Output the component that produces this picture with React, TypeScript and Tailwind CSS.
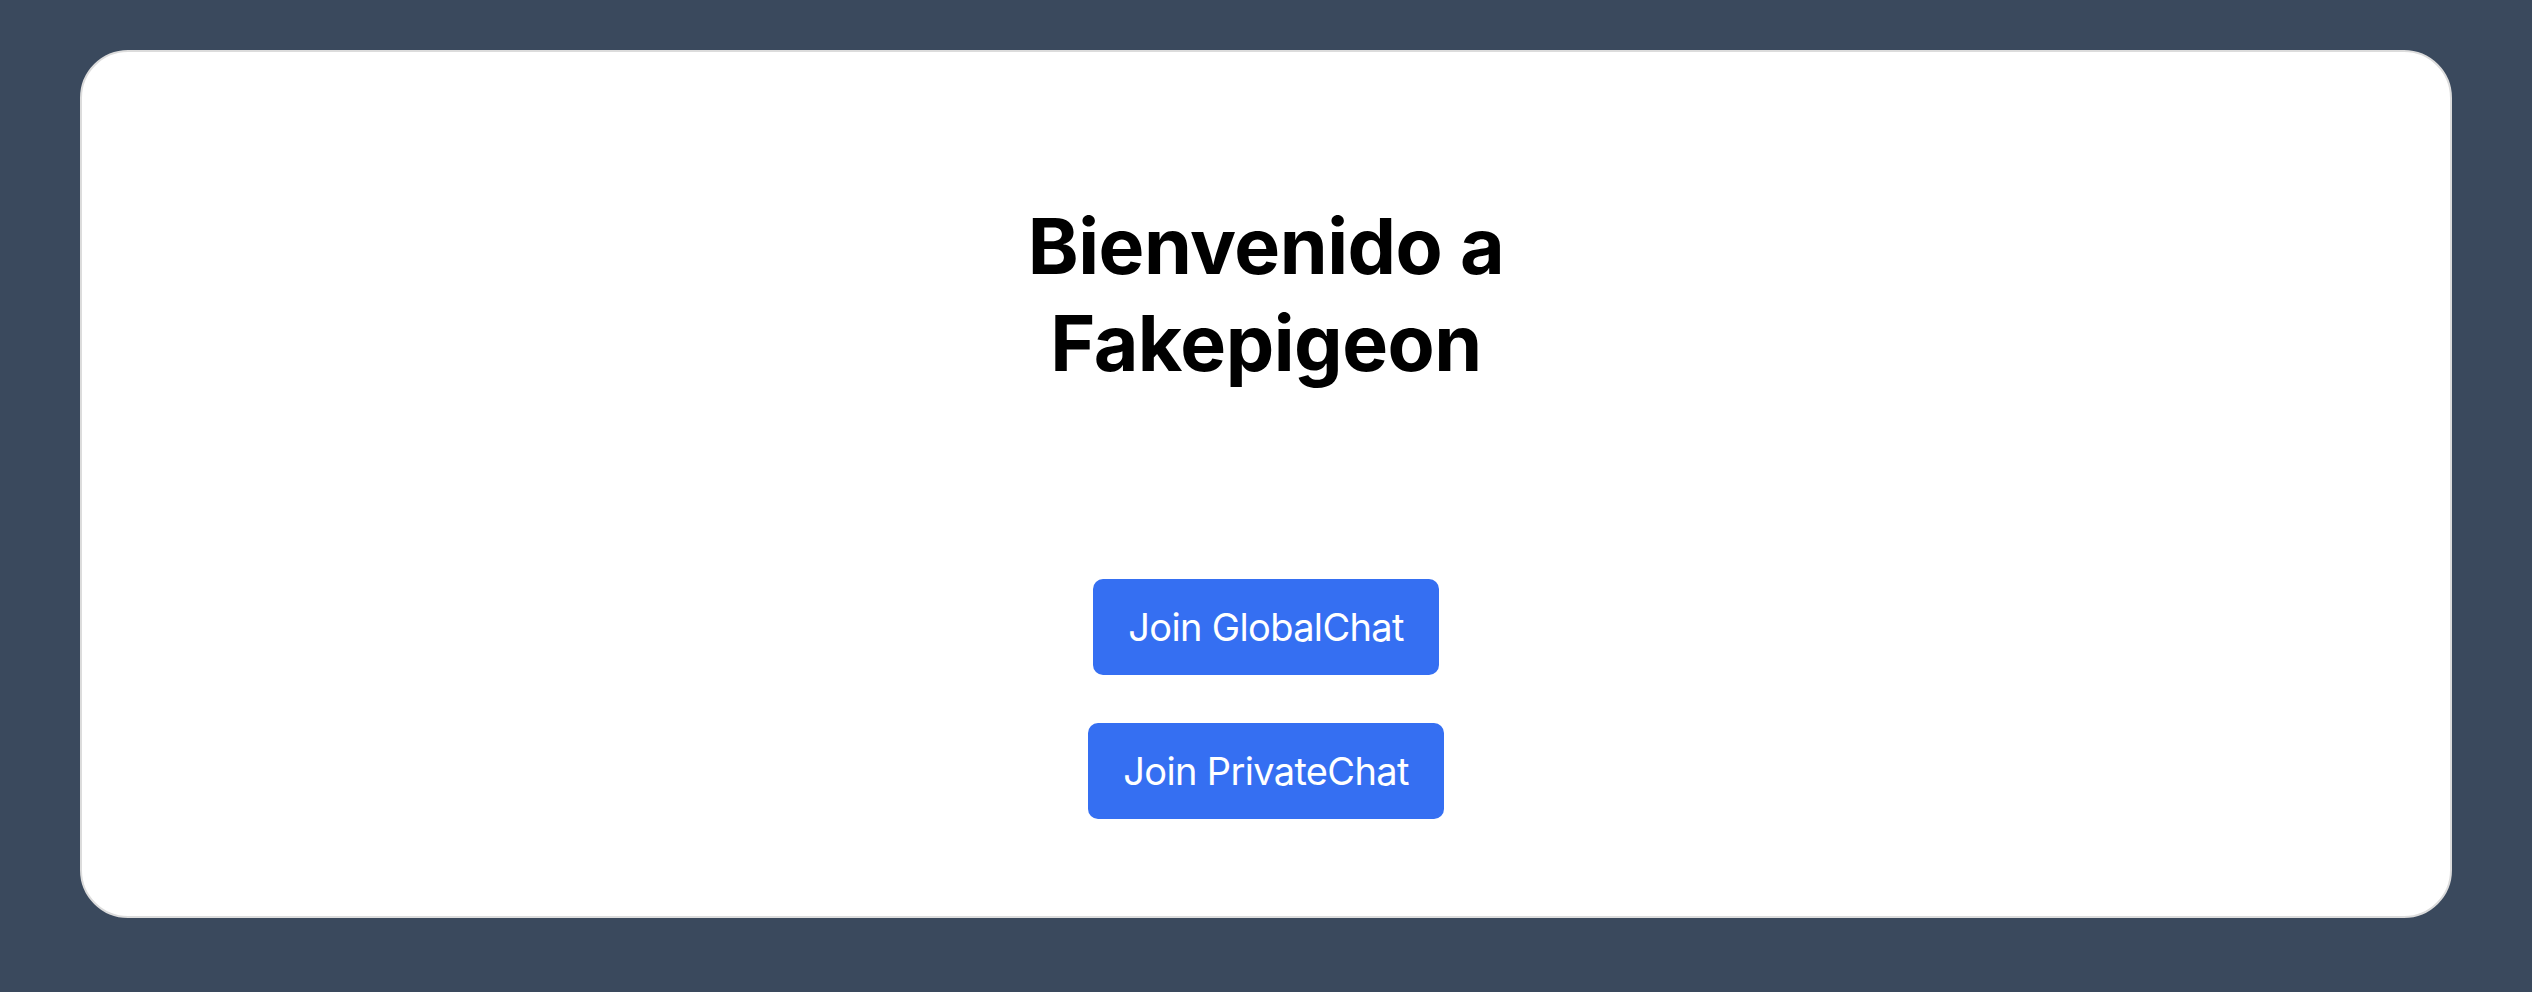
export default function App() {
  return (
    <div className="w-[2532px] h-[992px] bg-[#3a495d] pt-[50px] pl-[80px]" style={{ fontFamily: "Inter, 'Noto Sans', sans-serif" }}>
      <div className="w-[2372px] h-[868px] bg-white rounded-[48px] border-2 border-[#dcdcdc] flex flex-col items-center">
        <h1 className="mt-[146px] w-[560px] text-center text-[77px] leading-[97px] font-bold text-black tracking-[-0.5px]">
          Bienvenido a Fakepigeon
        </h1>
        <button className="mt-[187px] h-[96px] px-[35px] rounded-[10px] bg-[#356ff2] text-white text-[38px] tracking-[-0.65px]">
          Join GlobalChat
        </button>
        <button className="mt-[48px] h-[96px] px-[35px] rounded-[10px] bg-[#356ff2] text-white text-[38px] tracking-[-0.65px]">
          Join PrivateChat
        </button>
      </div>
    </div>
  );
}
